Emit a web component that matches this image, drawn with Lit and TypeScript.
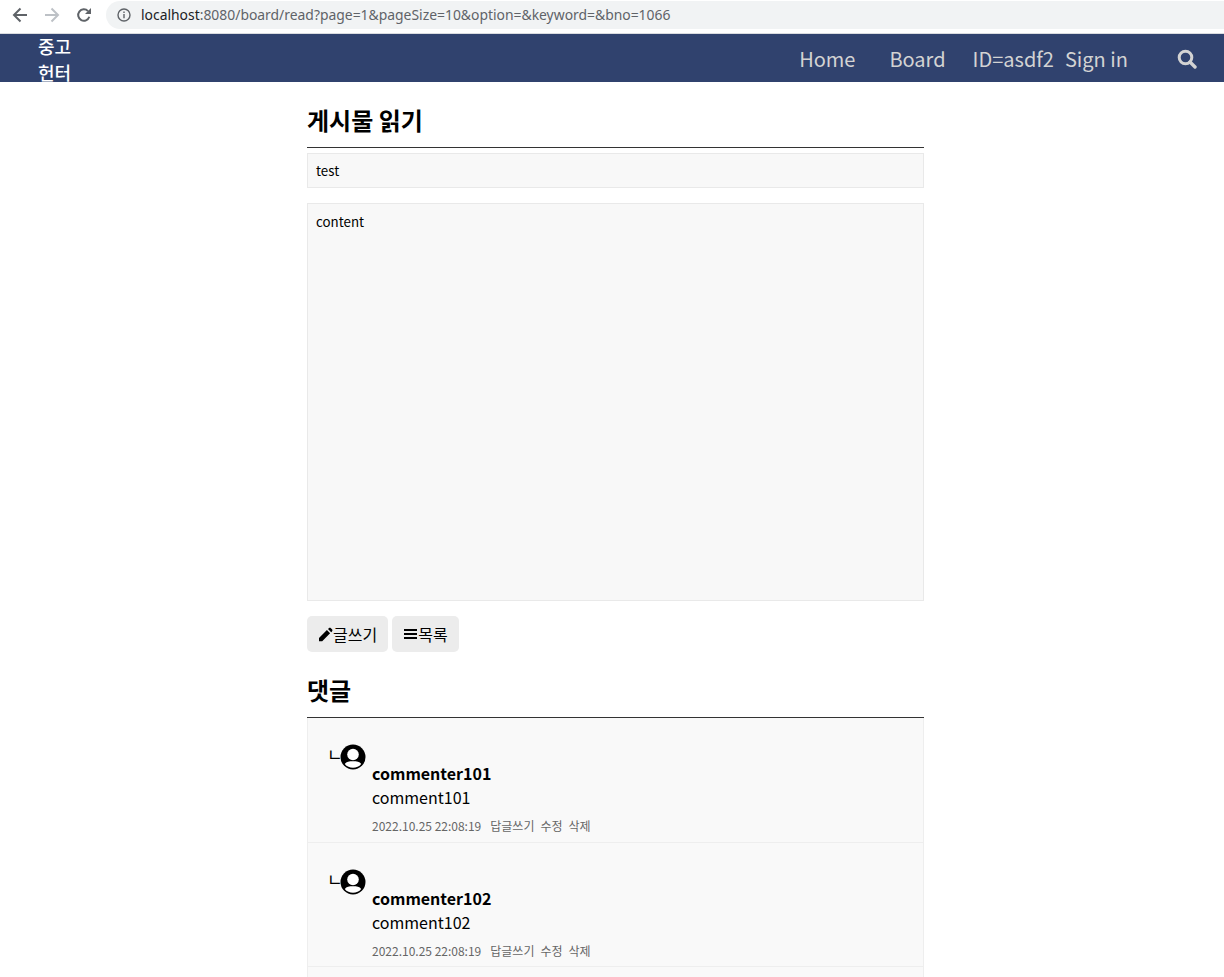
import { LitElement, html, css } from 'lit';
import { customElement } from 'lit/decorators.js';

const comments = [
  { name: 'commenter101', text: 'comment101', date: '2022.10.25 22:08:19' },
  { name: 'commenter102', text: 'comment102', date: '2022.10.25 22:08:19' },
];

@customElement('app-root')
export class AppRoot extends LitElement {
  static styles = css`
    :host {
      display: flex;
      flex-direction: column;
      height: 977px;
      overflow: hidden;
      background: #fff;
      color: #000;
      font-family: "Noto Sans CJK KR", "Noto Sans", sans-serif;
    }

    .chrome {
      display: flex;
      align-items: center;
      flex: none;
      height: 29px;
      padding-bottom: 4px;
      background: #fff;
      border-bottom: 1px solid #dadce0;
    }
    .chrome-btn {
      width: 32px;
      height: 29px;
      display: flex;
      align-items: center;
      justify-content: center;
      flex: none;
    }
    .chrome-btns {
      display: flex;
      padding-left: 4px;
      width: 106px;
      box-sizing: border-box;
    }
    .url {
      flex: 1;
      height: 28px;
      background: #f1f3f4;
      border-radius: 14px 0 0 14px;
      display: flex;
      align-items: center;
      padding-left: 11px;
      gap: 10px;
      font-family: "Noto Sans", sans-serif;
      font-size: 13.9px;
      color: #5f6368;
    }
    .url b {
      font-weight: 400;
      color: #202124;
    }

    nav {
      display: flex;
      align-items: center;
      flex: none;
      height: 48px;
      background: #30426e;
      color: #d3d3d3;
      font-size: 20px;
    }
    .logo {
      width: 36px;
      margin: 2px 0 0 38px;
      color: #fff;
      font-size: 18px;
      line-height: 26px;
      font-weight: 500;
    }
    .links {
      margin-left: auto;
      display: flex;
      align-items: center;
      padding: 2px 27px 0 0;
      line-height: 48px;
    }
    .links span:nth-child(1) { margin-right: 34px; }
    .links span:nth-child(2) { margin-right: 27px; }
    .links span:nth-child(3) { margin-right: 11px; }
    .links span:nth-child(4) { margin-right: 49px; }
    .links svg { display: block; }

    main {
      flex: 1;
      display: flex;
      flex-direction: column;
      width: 617px;
      margin-left: 307px;
    }
    h2 {
      margin: 0;
      font-size: 24px;
      font-weight: 700;
      line-height: 34px;
    }
    .read-title {
      padding-top: 21px;
      padding-bottom: 10px;
      border-bottom: 1px solid #333;
    }
    .box {
      box-sizing: border-box;
      background: #f8f8f8;
      border: 1px solid #e9e9e9;
      padding: 0 8px;
      font-size: 13.333px;
    }
    .subject {
      height: 35px;
      margin-top: 5px;
      line-height: 33px;
    }
    .content {
      height: 398px;
      margin-top: 15px;
      padding-top: 7px;
      line-height: 22px;
    }
    .buttons {
      display: flex;
      gap: 4px;
      margin-top: 15px;
    }
    .btn {
      display: flex;
      align-items: center;
      box-sizing: border-box;
      height: 36px;
      padding: 0 11px;
      background: #ececec;
      border-radius: 5px;
      font-size: 16px;
    }
    .reply-title {
      padding-top: 21px;
      padding-bottom: 10px;
      border-bottom: 1px solid #333;
    }
    .comments {
      flex: 1;
      margin: 0;
      padding: 1px 0 0;
      list-style: none;
      background: #f9f9f9;
      border-left: 1px solid #eeeeee;
      border-right: 1px solid #eeeeee;
    }
    .comment {
      box-sizing: border-box;
      height: 124px;
      padding: 26px 0 0 20px;
      border-bottom: 1px solid #eeeeee;
    }
    .comment:first-child {
      padding-top: 25px;
    }
    .who {
      display: flex;
      align-items: flex-start;
      height: 20px;
    }
    .who svg {
      display: block;
      flex: none;
    }
    .tick {
      width: 13px;
      margin-left: -1px;
      flex: none;
      font-size: 17px;
      line-height: 20px;
    }
    .name {
      margin-left: 44px;
      margin-top: -3px;
      font-size: 16px;
      font-weight: 700;
      line-height: 24px;
    }
    .text {
      margin-left: 44px;
      font-size: 16px;
      line-height: 24px;
    }
    .meta {
      display: flex;
      gap: 6px;
      margin: 8px 0 0 44px;
      font-size: 12px;
      line-height: 18px;
      color: #666;
    }
    .meta .date {
      margin-right: 3px;
    }
  `;

  private back() {
    return html`<svg width="16" height="16" viewBox="0 0 16 16"><path d="M15 8H2.5M8.500 1.500 2 8l6.500 6.500" fill="none" stroke="#5f6368" stroke-width="2"/></svg>`;
  }

  private forward() {
    return html`<svg width="16" height="16" viewBox="0 0 16 16"><path d="M1 8h12.500M7.500 1.500 14 8l-6.500 6.500" fill="none" stroke="#bdc1c6" stroke-width="2"/></svg>`;
  }

  private reload() {
    return html`<svg width="16" height="16" viewBox="0 0 16 16"><path d="M13.300 9.800A5.700 5.700 0 1 1 12 4.100" fill="none" stroke="#5f6368" stroke-width="2"/><path d="M15 1v6H9z" fill="#5f6368"/></svg>`;
  }

  private info() {
    return html`<svg width="14" height="14" viewBox="0 0 14 14"><circle cx="7" cy="7" r="6" fill="none" stroke="#5f6368" stroke-width="1.400"/><path d="M6.300 6h1.400v4.300H6.300zM6.300 3.500h1.400v1.400H6.300z" fill="#5f6368"/></svg>`;
  }

  private search() {
    return html`<svg width="20" height="20" viewBox="0 0 20 20"><circle cx="8.500" cy="8.500" r="6.300" fill="none" stroke="#d3d3d3" stroke-width="3"/><path d="m13 13 5 5" stroke="#d3d3d3" stroke-width="3.400" stroke-linecap="round"/></svg>`;
  }

  private pencil() {
    return html`<svg width="15" height="15" viewBox="0 0 15 15"><path d="M1 11 8.900 3.100l3.200 3.200L4.200 14.200H1zM10 2l.8-.8c.6-.6 1.500-.6 2.100 0l1.100 1.100c.6.600.6 1.500 0 2.100l-.8.800z" fill="#000"/></svg>`;
  }

  private bars() {
    return html`<svg width="15" height="14" viewBox="0 0 15 14"><path d="M1 2h13v2H1zM1 6h13v2H1zM1 10h13v2H1z" fill="#000"/></svg>`;
  }

  private avatar() {
    return html`<svg width="26" height="26" viewBox="0 0 26 26"><circle cx="13" cy="13" r="12.500" fill="#000"/><circle cx="13" cy="10.500" r="5.800" fill="#fff"/><path d="M4.800 20c1.500-2.400 4.500-2.800 8.200-2.800s6.700.4 8.200 2.800C19.300 22.500 16.300 23.700 13 23.700s-6.300-1.200-8.200-3.700z" fill="#fff"/></svg>`;
  }

  render() {
    return html`
      <div class="chrome">
        <div class="chrome-btns">
          <div class="chrome-btn">${this.back()}</div>
          <div class="chrome-btn">${this.forward()}</div>
          <div class="chrome-btn">${this.reload()}</div>
        </div>
        <div class="url">
          ${this.info()}
          <span><b>localhost</b>:8080/board/read?page=1&pageSize=10&option=&keyword=&bno=1066</span>
        </div>
      </div>
      <nav>
        <div class="logo">중고 헌터</div>
        <div class="links">
          <span>Home</span>
          <span>Board</span>
          <span>ID=asdf2</span>
          <span>Sign in</span>
          ${this.search()}
        </div>
      </nav>
      <main>
        <h2 class="read-title">게시물 읽기</h2>
        <div class="box subject">test</div>
        <div class="box content">content</div>
        <div class="buttons">
          <div class="btn">${this.pencil()}글쓰기</div>
          <div class="btn">${this.bars()}목록</div>
        </div>
        <h2 class="reply-title">댓글</h2>
        <ul class="comments">
          ${comments.map(c => html`
            <li class="comment">
              <div class="who">
                <span class="tick">ㄴ</span>
                ${this.avatar()}
              </div>
              <div class="name">${c.name}</div>
              <div class="text">${c.text}</div>
              <div class="meta">
                <span class="date">${c.date}</span>
                <span>답글쓰기</span>
                <span>수정</span>
                <span>삭제</span>
              </div>
            </li>
          `)}
        </ul>
      </main>
    `;
  }
}
